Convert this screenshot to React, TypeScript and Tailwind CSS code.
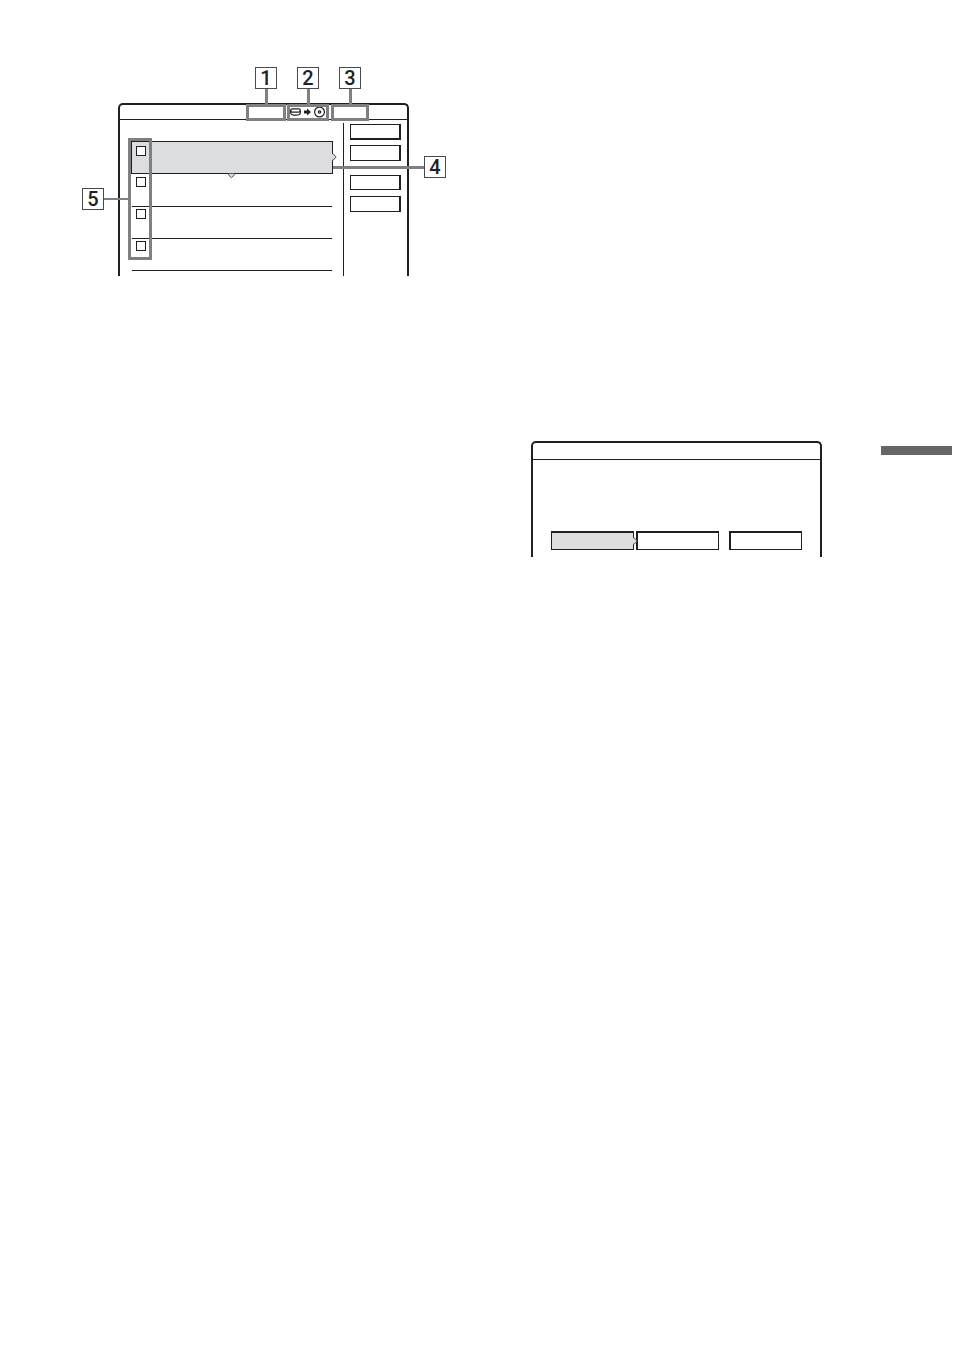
const sideButtons = [
  { label: "Side button 1", style: "h-4 border-b-2" },
  { label: "Side button 2", style: "mt-[5px] h-4 border-b" },
  { label: "Side button 3", style: "mt-[14px] h-[15px] border-b" },
  { label: "Side button 4", style: "mt-[6px] h-4 border-b" },
];

const titles = ["Title 1", "Title 2", "Title 3", "Title 4"];

function CalloutNumber({ value }: { value: number }) {
  return (
    <span className="flex size-[22px] shrink-0 items-center justify-center border border-[#4a4a4c] bg-white font-[Roboto,sans-serif] text-xl leading-5 font-medium">
      {value}
    </span>
  );
}

function HardDiskIcon() {
  return (
    <svg
      width="11"
      height="8"
      viewBox="0 0 11 8"
      fill="none"
      stroke="#231f20"
      strokeWidth="1.2"
    >
      <rect x="0.7" y="0.8" width="9.6" height="3.4" rx="1.7" />
      <path d="M0.7 2.6V5C0.7 6.6 2.6 7.2 5.5 7.2S10.3 6.6 10.3 5V2.6" />
    </svg>
  );
}

function ArrowIcon() {
  return (
    <svg width="7" height="8" viewBox="0 0 7 8" fill="#231f20">
      <path d="M0 2.5H3V0.4L7 4L3 7.6V5.5H0Z" />
    </svg>
  );
}

function DiscIcon() {
  return (
    <svg width="12" height="12" viewBox="0 0 12 12" fill="none">
      <circle cx="5.5" cy="6" r="4.9" stroke="#231f20" strokeWidth="1.2" />
      <circle cx="5.5" cy="6" r="1.8" fill="#231f20" />
      <circle cx="5.5" cy="6" r="0.5" fill="#fff" />
    </svg>
  );
}

function Caret({ className }: { className: string }) {
  return (
    <svg
      className={className}
      width="5"
      height="8"
      viewBox="0 0 5 8"
      fill="#dcddde"
      stroke="#4a4a4c"
    >
      <path d="M0 0.8L1.2 0.8L4.2 4L1.2 7.2L0 7.2" />
    </svg>
  );
}

function TitleListFigure() {
  return (
    <figure className="relative w-[291px]">
      <div className="rounded-t-[5px] border-x-2 border-t-2 border-[#231f20]">
        <header className="flex h-[15px] items-center border-b border-[#231f20] pl-[170px]">
          <div className="flex items-center gap-[3px]">
            <HardDiskIcon />
            <ArrowIcon />
            <DiscIcon />
          </div>
        </header>
        <div className="flex pt-[3px]">
          <ul className="mt-[18px] ml-[11px] grow">
            {titles.map((title, i) => (
              <li
                key={title}
                className={
                  i === 0
                    ? "relative mb-px flex h-[33px] border border-[#231f20] bg-[#dcddde] pt-1 pl-1"
                    : "mx-px flex h-8 border-b border-[#231f20] pt-[2px] pl-1"
                }
              >
                <input
                  type="checkbox"
                  aria-label={title}
                  className="size-[10px] appearance-none border border-[#231f20] bg-white"
                />
                {i === 0 && (
                  <>
                    <Caret className="absolute top-[11px] -right-[5px]" />
                    <Caret className="absolute -bottom-[7px] left-[97px] rotate-90" />
                  </>
                )}
              </li>
            ))}
          </ul>
          <div className="ml-[10px] flex h-[153px] w-16 flex-col border-l border-[#231f20] pt-px pl-[6px]">
            {sideButtons.map((button) => (
              <button
                key={button.label}
                type="button"
                aria-label={button.label}
                className={`w-[51px] border-t border-r-2 border-l border-[#231f20] bg-white ${button.style}`}
              />
            ))}
          </div>
        </div>
      </div>

      {/* callouts drawn over the screen */}
      <div className="absolute -top-9 left-32 flex w-10 flex-col items-center">
        <CalloutNumber value={1} />
        <span className="h-[15px] w-[3px] bg-[#808084]" />
        <span className="h-[17px] w-full border-3 border-[#808084]" />
      </div>
      <div className="absolute -top-9 left-[169px] flex w-[42px] flex-col items-center">
        <CalloutNumber value={2} />
        <span className="h-[15px] w-[3px] bg-[#808084]" />
        <span className="h-[17px] w-full border-3 border-[#808084]" />
      </div>
      <div className="absolute -top-9 left-[213px] flex w-[38px] flex-col items-center">
        <CalloutNumber value={3} />
        <span className="h-[15px] w-[3px] bg-[#808084]" />
        <span className="h-[17px] w-full border-3 border-[#808084]" />
      </div>
      <div className="absolute top-[53px] left-[215px] flex items-center">
        <span className="h-[3px] w-[91px] bg-[#808084]" />
        <CalloutNumber value={4} />
      </div>
      <div className="absolute top-[35px] -left-9 flex items-center">
        <CalloutNumber value={5} />
        <span className="h-[2px] w-6 bg-[#808084]" />
        <span className="h-[122px] w-6 border-3 border-[#808084]" />
      </div>
    </figure>
  );
}

function DialogFigure() {
  return (
    <figure className="w-[291px] rounded-t-[5px] border-x-2 border-t-2 border-[#231f20]">
      <header className="h-[17px] border-b border-[#231f20]" />
      <div className="flex px-[18px] pt-[71px] pb-[7px]">
        <button
          type="button"
          aria-label="Option 1"
          className="relative h-[19px] w-[83px] border border-t-2 border-[#231f20] bg-[#dcddde]"
        >
          <Caret className="absolute top-1 -right-[5px]" />
        </button>
        <button
          type="button"
          aria-label="Option 2"
          className="ml-[2px] h-[19px] w-[83px] border border-t-2 border-l-2 border-[#231f20]"
        />
        <button
          type="button"
          aria-label="Option 3"
          className="ml-[10px] h-[19px] w-[73px] border border-t-2 border-l-2 border-[#231f20]"
        />
      </div>
    </figure>
  );
}

function App() {
  return (
    <main className="flex min-h-screen bg-white font-['Liberation_Sans',Arial,sans-serif] text-[#231f20]">
      <section className="w-1/2 pt-[103px] pl-[118px]">
        <TitleListFigure />
      </section>
      <section className="flex w-1/2 items-start justify-between pt-[441px] pr-[2px] pl-[54px]">
        <DialogFigure />
        <div className="mt-[5px] h-[9px] w-[71px] bg-[#666666]" />
      </section>
    </main>
  );
}

export default App;
